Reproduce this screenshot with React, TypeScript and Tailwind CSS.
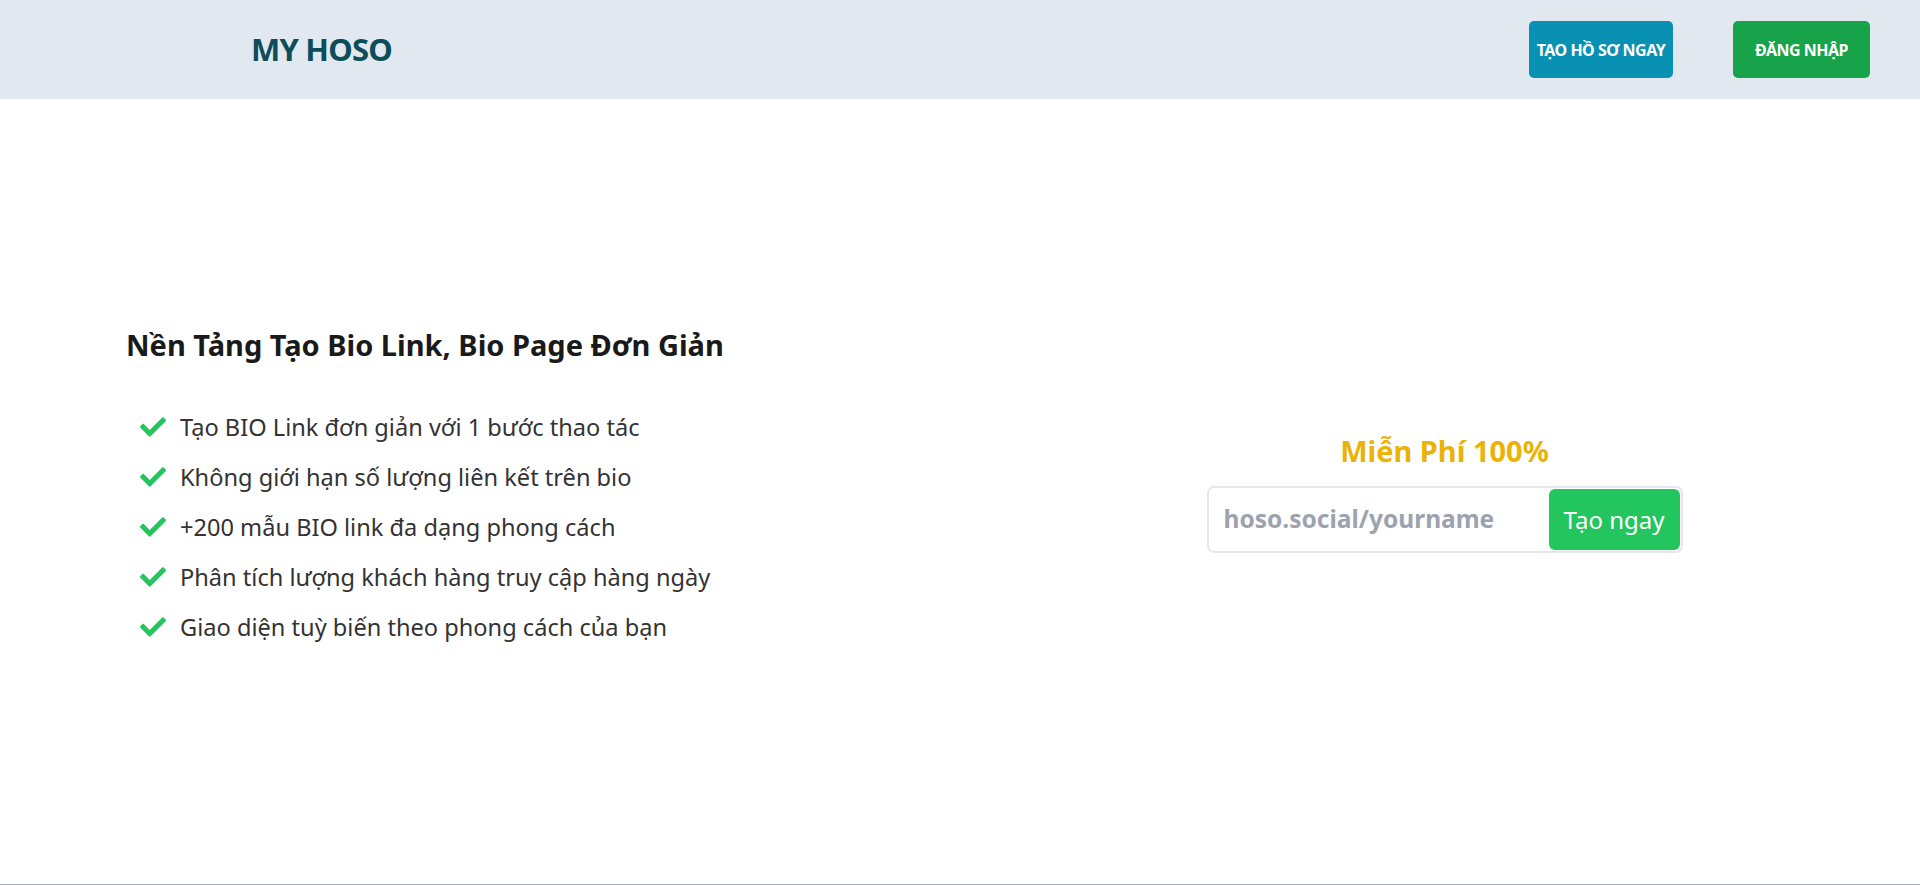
import { FaCheck } from 'react-icons/fa';

const features = [
  'Tạo BIO Link đơn giản với 1 bước thao tác',
  'Không giới hạn số lượng liên kết trên bio',
  '+200 mẫu BIO link đa dạng phong cách',
  'Phân tích lượng khách hàng truy cập hàng ngày',
  'Giao diện tuỳ biến theo phong cách của bạn',
];

const Header = () => (
  <header className="h-[99px] bg-[#e2e8f0] flex items-center justify-between pl-[251px] pr-[50px]">
    <a href="#" className="text-[31px] font-bold text-[#0d4d5a] tracking-tight">
      MY HOSO
    </a>
    <div className="flex items-center gap-[60px]">
      <button className="w-[144px] h-[57px] rounded-[5px] bg-[#0891b2] text-white text-[16px] font-bold tracking-[-0.5px]">
        TẠO HỒ SƠ NGAY
      </button>
      <button className="w-[137px] h-[57px] rounded-[5px] bg-[#16a34a] text-white text-[16px] font-bold tracking-[-0.5px]">
        ĐĂNG NHẬP
      </button>
    </div>
  </header>
);

const App: React.FC = () => {
  return (
    <div className="min-h-[885px] flex flex-col bg-white" style={{ fontFamily: '"Noto Sans", "Open Sans", sans-serif' }}>
      <Header />
      <main className="h-[785px] grid grid-cols-2 items-center">
        <div className="pl-[126px] pb-[12px]">
          <h1 className="text-[29px] font-bold text-[#1a1a1a] leading-tight">
            Nền Tảng Tạo Bio Link, Bio Page Đơn Giản
          </h1>
          <ul className="mt-[47px] flex flex-col gap-[16px] pl-[14px]">
            {features.map((f) => (
              <li key={f} className="flex items-center gap-[14px] text-[23.6px] text-[#333] leading-[34px]">
                <FaCheck className="w-[26px] h-[26px] text-[#22c55e] shrink-0" />
                <span>{f}</span>
              </li>
            ))}
          </ul>
        </div>
        <div className="flex flex-col items-center pl-[9px] pt-[3px]">
          <p className="text-[29px] font-bold text-[#eab308] leading-tight">Miễn Phí 100%</p>
          <div className="mt-[17px] w-[476px] h-[67px] flex items-stretch border-2 border-[#e5e7eb] rounded-[7px] p-[1px]">
            <input
              type="text"
              placeholder="hoso.social/yourname"
              className="flex-1 min-w-0 px-[14px] text-[24.5px] font-bold text-gray-700 placeholder:text-[#9ca3af] outline-none bg-transparent"
            />
            <button className="w-[131px] rounded-[6px] bg-[#22c55e] text-white text-[24px]">
              Tạo ngay
            </button>
          </div>
        </div>
      </main>
      <footer className="border-t border-[#a8b0b8] h-[1px]" />
    </div>
  );
};

export default App;
